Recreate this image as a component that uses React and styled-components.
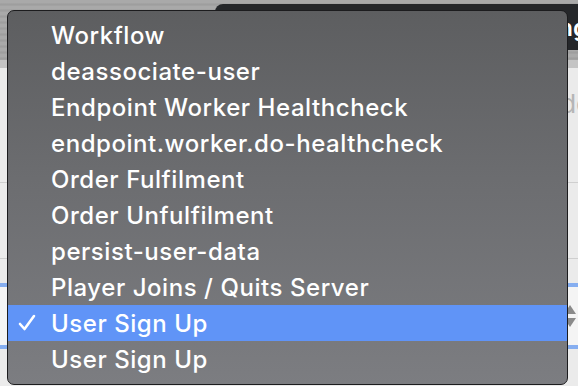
import React from 'react';
import styled, { createGlobalStyle } from 'styled-components';

const GlobalStyle = createGlobalStyle`
  html, body {
    margin: 0;
    padding: 0;
    background: #ececec;
  }
  #root {
    width: 578px;
    height: 386px;
    overflow: hidden;
  }
`;

const Page = styled.div`
  position: relative;
  width: 578px;
  height: 386px;
  overflow: hidden;
  background: #ebebeb;
  font-family: Inter, "Liberation Sans", sans-serif;
  display: flex;
  flex-direction: column;
`;

const Toolbar = styled.div`
  height: 60px;
  display: flex;
  align-items: flex-start;
  background: repeating-linear-gradient(
    180deg,
    #a9a9a9 0px,
    #a9a9a9 3px,
    #9c9c9c 4px,
    #a4a4a4 6px
  );
  border-bottom: 8px solid #c4c4c4;
`;

const TitleTab = styled.div`
  margin: 4px -10px 0 215px;
  flex: 1;
  height: 46px;
  background: #25272a;
  border-radius: 8px 0 0 0;
  display: flex;
  justify-content: flex-end;
  align-items: center;
  color: #fff;
  font-size: 24px;
  font-weight: 600;
`;

const Section = styled.div`
  height: ${(p) => p.h}px;
  border-bottom: 1px solid ${(p) => (p.line ? '#cfcfcf' : 'transparent')};
  display: flex;
  align-items: flex-start;
  justify-content: flex-end;
  padding-top: ${(p) => p.pt || 0}px;
  box-sizing: border-box;
`;

const Placeholder = styled.span`
  color: #b5b5b5;
  font-size: 26px;
  margin-right: -14px;
`;

const NumberField = styled.div`
  margin-top: 24px;
  height: 58px;
  border-top: 4px solid #86aef0;
  border-bottom: 4px solid #86aef0;
  display: flex;
  justify-content: flex-end;
  align-items: center;
  background: #f4f4f4;
`;

const Stepper = styled.svg`
  margin-right: 1px;
`;

const Menu = styled.div`
  position: absolute;
  left: 7px;
  top: 10px;
  width: 559px;
  height: 367px;
  border: 1px solid #1c1c1e;
  border-radius: 7px;
  background: linear-gradient(180deg, #5d5e60 0%, #6c6d70 45%, #7c7d81 100%);
  padding-top: 6px;
  box-sizing: content-box;
  overflow: hidden;
  display: flex;
  flex-direction: column;
`;

const Item = styled.div`
  height: 36px;
  flex-shrink: 0;
  display: flex;
  align-items: center;
  position: relative;
  padding-left: 43px;
  color: #fff;
  font-size: 24px;
  font-weight: 500;
  letter-spacing: 0.55px;
  background: ${(p) => (p.active ? '#6094f7' : 'transparent')};
`;

const Check = styled.svg`
  position: absolute;
  left: 10px;
  top: 9px;
`;

const items = [
  'Workflow',
  'deassociate-user',
  'Endpoint Worker Healthcheck',
  'endpoint.worker.do-healthcheck',
  'Order Fulfilment',
  'Order Unfulfilment',
  'persist-user-data',
  'Player Joins / Quits Server',
  'User Sign Up',
  'User Sign Up',
];

export default function App() {
  return (
    <>
      <GlobalStyle />
      <Page>
        <Toolbar>
          <TitleTab>Editing</TitleTab>
        </Toolbar>
        <Section h={115} pt={20} line>
          <Placeholder>Add</Placeholder>
        </Section>
        <Section h={76} line />
        <NumberField>
          <Stepper width="14" height="30" viewBox="0 0 14 30">
            <path d="M7 4 L13 13 L1 13 Z" fill="#8a8a8a" />
            <path d="M7 26 L13 17 L1 17 Z" fill="#8a8a8a" />
          </Stepper>
        </NumberField>
        <Menu>
          {items.map((label, i) => (
            <Item key={i} active={i === 8}>
              {i === 8 && (
                <Check width="18" height="18" viewBox="0 0 18 18">
                  <path
                    d="M2 10 L6.5 15 L16 2"
                    fill="none"
                    stroke="#fff"
                    strokeWidth="2.6"
                    strokeLinecap="round"
                    strokeLinejoin="round"
                  />
                </Check>
              )}
              {label}
            </Item>
          ))}
        </Menu>
      </Page>
    </>
  );
}
